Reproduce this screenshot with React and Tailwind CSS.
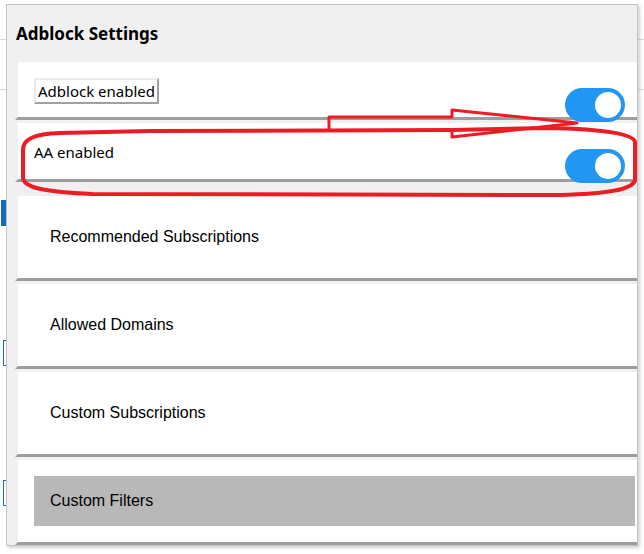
import React from 'react';

const uiFont = { fontFamily: '"Noto Sans", "Open Sans", sans-serif' };
const arialFont = { fontFamily: '"Liberation Sans", Arial, sans-serif' };

const Toggle = ({ className = '' }) => (
  <div className={`w-[60px] h-[34px] rounded-full bg-[#2196f3] flex items-center justify-end pr-[4px] shrink-0 ${className}`}>
    <div className="w-[26px] h-[26px] rounded-full bg-white" />
  </div>
);

const panel = 'bg-white bg-clip-padding border-l-[3px] border-l-transparent border-b-[3px] border-b-[#9e9e9e]';

const Annotation = () => (
  <svg className="absolute inset-0 pointer-events-none" width="644" height="554" viewBox="0 0 644 554">
    {/* hand drawn ring round the AA row */}
    <path
      d="M 60,133 C 34,134 23,139 23,150 L 23,178 C 24,188 46,192 92,194 L 560,195 C 604,194 633,190 635,180 L 635,142 C 634,134 602,129 548,128 L 452,130 L 150,131 Z"
      fill="none"
      stroke="#ed1c24"
      strokeWidth="4"
      strokeLinejoin="round"
    />
    {/* arrow pointing at the first toggle */}
    <path
      d="M 329,129 L 329,117 L 452,117 L 452,110 L 577,123 L 452,137 L 452,130"
      fill="none"
      stroke="#ed1c24"
      strokeWidth="3"
      strokeLinejoin="round"
    />
  </svg>
);

export default function App() {
  return (
    <div className="relative w-[644px] h-[554px] bg-white overflow-hidden">
      {/* page behind the dialog */}
      <div className="h-[40px] border-b border-[#d9d9d9]" />
      <div className="h-[50px] border-b border-[#d9d9d9]" />
      <div className="ml-[1px] mt-[110px] w-[24px] h-[26px] bg-[#1766c6]" />
      <div className="ml-[3px] mt-[114px] w-[30px] h-[26px] border border-[#1766c6]" />
      <div className="ml-[3px] mt-[114px] w-[30px] h-[26px] border border-[#1766c6]" />

      {/* dialog */}
      <div className="absolute left-[6px] top-[4px] w-[632px] h-[542px] bg-[#f0f0f0] border border-[#c4c4c4] shadow-[2px_2px_3px_rgba(0,0,0,0.18)] flex flex-col">
        <div className="h-[57px] flex items-center pl-[9px] shrink-0">
          <h1 className="text-[17px] font-bold text-black" style={uiFont}>Adblock Settings</h1>
        </div>

        <div className="ml-[8px] flex flex-col">
          <div className={`${panel} h-[58px] flex items-start justify-between pl-[16px] pt-[16px]`}>
            <span
              className="h-[26px] px-[2px] flex items-center text-[15px] text-black bg-white border-2 border-t-[#ececec] border-l-[#ececec] border-b-[#a0a0a0] border-r-[#a0a0a0]"
              style={uiFont}
            >
              Adblock enabled
            </span>
            <Toggle className="mt-[10px] mr-[12px]" />
          </div>

          <div className={`${panel} h-[59px] mt-[3px] flex items-start justify-between pl-[16px] pt-[19px]`}>
            <span className="text-[15px] text-black leading-[20px]" style={uiFont}>AA enabled</span>
            <Toggle className="mt-[7px] mr-[12px]" />
          </div>

          <div className={`${panel} h-[85px] mt-[14px] flex items-center pl-[32px]`}>
            <span className="text-[16px] text-black" style={arialFont}>Recommended Subscriptions</span>
          </div>

          <div className={`${panel} h-[85px] mt-[3px] flex items-center pl-[32px]`}>
            <span className="text-[16px] text-black" style={arialFont}>Allowed Domains</span>
          </div>

          <div className={`${panel} h-[85px] mt-[3px] flex items-center pl-[32px]`}>
            <span className="text-[16px] text-black" style={arialFont}>Custom Subscriptions</span>
          </div>

          <div className={`${panel} h-[85px] mt-[3px] pt-[16px] pl-[16px] pr-[2px]`}>
            <div className="h-[50px] bg-[#b8b8b8] flex items-center pl-[16px]">
              <span className="text-[16px] text-black" style={arialFont}>Custom Filters</span>
            </div>
          </div>
        </div>
      </div>

      <Annotation />
    </div>
  );
}
